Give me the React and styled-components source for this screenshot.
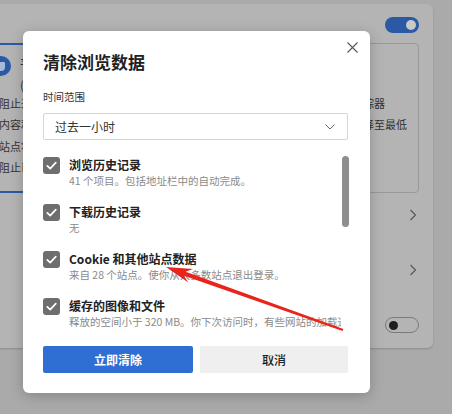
import React from 'react';
import styled, { createGlobalStyle } from 'styled-components';

const Global = createGlobalStyle`
  html, body { margin: 0; padding: 0; }
  body {
    width: 452px; height: 414px; overflow: hidden;
    background: #aaaaaa;
    font-family: "Noto Sans CJK SC", "Noto Sans", sans-serif;
  }
`;

const Page = styled.div`
  position: relative;
  width: 452px;
  height: 414px;
  overflow: hidden;
  padding-top: 4px;
  box-sizing: border-box;
`;

const SettingsCard = styled.section`
  margin-left: -20px;
  width: 453px;
  height: 344px;
  box-sizing: border-box;
  padding: 0 14px 0 8px;
  background: #b4b4b4;
  border-radius: 6px;
  box-shadow: 0 1px 2px rgba(0, 0, 0, 0.18);
  display: flex;
  flex-direction: column;
`;

const HeaderRow = styled.div`
  height: 39px;
  padding-top: 2px;
  box-sizing: border-box;
  display: flex;
  justify-content: flex-end;
  align-items: center;
`;

const Toggle = styled.div`
  width: 34px;
  height: 16px;
  box-sizing: border-box;
  border-radius: 8px;
  display: flex;
  align-items: center;
  padding: 0 3px;
  justify-content: ${p => (p.$on ? 'flex-end' : 'flex-start')};
  background: ${p => (p.$on ? '#2a5aa6' : 'transparent')};
  border: ${p => (p.$on ? 'none' : '1px solid #7a7a7a')};
`;

const Knob = styled.span`
  width: ${p => (p.$on ? '10px' : '9px')};
  height: ${p => (p.$on ? '10px' : '9px')};
  border-radius: 50%;
  background: ${p => (p.$on ? '#c9c9c9' : '#1e1e1e')};
`;

const Options = styled.div`
  height: 150px;
  display: flex;
  justify-content: space-between;
`;

const Option = styled.div`
  width: ${p => p.$w}px;
  box-sizing: border-box;
  border: ${p => (p.$selected ? '2px solid #2a5aa6' : '1px solid #999999')};
  border-radius: ${p => (p.$selected ? '6px' : '4px')};
  padding: ${p => (p.$selected ? '8px 6px 0 1px' : '9px 8px 0 11px')};
  color: #333333;
  font-size: 11px;
`;

const OptionHead = styled.div`
  display: flex;
  align-items: flex-start;
  gap: 9px;
  height: 40px;
`;

const ShieldIcon = styled.div`
  width: 20px;
  height: 20px;
  margin-top: 3px;
  border-radius: 50%;
  background: #2a5aa6;
  display: flex;
  align-items: center;
  justify-content: center;
  flex: none;
`;

const ShieldInner = styled.span`
  width: 8px;
  height: 9px;
  border-radius: 1px 1px 4px 4px;
  background: #a9bad6;
`;

const OptionTitle = styled.div`
  font-size: 12px;
  line-height: 21px;
  white-space: nowrap;
`;

const OptionList = styled.div`
  margin-top: 0;
  padding-left: ${p => (p.$selected ? '8px' : '0')};
  line-height: 21.3px;
  white-space: nowrap;
`;

const Row = styled.div`
  height: 44px;
  margin-top: ${p => (p.$first ? '0' : '11px')};
  display: flex;
  align-items: center;
  justify-content: flex-end;
`;

const Chevron = styled.svg`
  width: 8px;
  height: 12px;
  margin-right: 2px;
`;

const Dialog = styled.div`
  position: absolute;
  left: 23px;
  top: 31px;
  width: 347px;
  height: 362px;
  box-sizing: border-box;
  padding: 19px 22px 0 20px;
  background: #ffffff;
  border-radius: 6px;
  box-shadow: 0 3px 14px rgba(0, 0, 0, 0.22);
  display: flex;
  flex-direction: column;
`;

const Close = styled.svg`
  position: absolute;
  top: 11px;
  right: 12px;
  width: 11px;
  height: 11px;
`;

const Title = styled.h1`
  margin: 0;
  font-size: 17px;
  line-height: 24px;
  font-weight: 700;
  color: #1f1f1f;
`;

const Label = styled.div`
  margin-top: 15px;
  font-size: 10.5px;
  line-height: 16px;
  color: #333333;
`;

const Select = styled.div`
  margin-top: 8px;
  height: 27px;
  box-sizing: border-box;
  border: 1px solid #d6d6d6;
  border-radius: 2px;
  padding: 0 12px 0 11px;
  display: flex;
  align-items: center;
  justify-content: space-between;
  font-size: 12px;
  color: #333333;
`;

const ListWrap = styled.div`
  height: 194px;
  margin-right: -1px;
  display: flex;
  gap: 1px;
  overflow: hidden;
`;

const Items = styled.div`
  flex: 1;
  min-width: 0;
  padding-top: 17px;
  display: flex;
  flex-direction: column;
  gap: 15px;
`;

const Item = styled.div`
  display: flex;
  gap: 9px;
  min-width: 0;
`;

const Check = styled.div`
  width: 17px;
  height: 17px;
  flex: none;
  border-radius: 3px;
  background: #6e6e6e;
  display: flex;
  align-items: center;
  justify-content: center;
`;

const ItemText = styled.div`
  min-width: 0;
  flex: 1;
  overflow: hidden;
`;

const ItemTitle = styled.div`
  font-size: 12px;
  line-height: 16px;
  font-weight: 700;
  color: #222222;
  white-space: nowrap;
`;

const ItemSub = styled.div`
  font-size: 10.5px;
  line-height: 16px;
  color: #8a8a8a;
  white-space: nowrap;
  overflow: hidden;
`;

const ScrollTrack = styled.div`
  width: 7px;
  flex: none;
`;

const Thumb = styled.div`
  margin-top: 16px;
  height: 71px;
  border-radius: 4px;
  background: #8e8e8e;
`;

const Buttons = styled.div`
  margin-top: 12px;
  display: grid;
  grid-template-columns: 150px 1fr;
  gap: 7px;
`;

const Button = styled.div`
  height: 27px;
  display: flex;
  align-items: center;
  justify-content: center;
  font-size: 12px;
  font-weight: ${p => (p.$primary ? 700 : 500)};
  border-radius: 2px;
  color: ${p => (p.$primary ? '#ffffff' : '#222222')};
  background: ${p => (p.$primary ? '#2f6fd3' : '#efefef')};
`;

const Annotation = styled.svg`
  position: absolute;
  left: 0;
  top: 0;
  width: 452px;
  height: 414px;
  pointer-events: none;
`;

const CheckMark = () => (
  <svg width="13" height="13" viewBox="0 0 13 13">
    <path d="M2.3 6.8 L5.2 9.6 L10.8 3.6" fill="none" stroke="#ffffff" strokeWidth="1.7" strokeLinecap="round" strokeLinejoin="round" />
  </svg>
);

const ChevronRight = () => (
  <Chevron viewBox="0 0 8 12">
    <path d="M1.5 1 L6.5 6 L1.5 11" fill="none" stroke="#555555" strokeWidth="1.1" />
  </Chevron>
);

const items = [
  { title: '浏览历史记录', sub: '41 个项目。包括地址栏中的自动完成。' },
  { title: '下载历史记录', sub: '无' },
  { title: 'Cookie 和其他站点数据', sub: '来自 28 个站点。使你从大多数站点退出登录。' },
  { title: '缓存的图像和文件', sub: '释放的空间小于 320 MB。你下次访问时，有些网站的加载速度可能会更慢。' },
];

export default function App() {
  return (
    <Page>
      <Global />
      <SettingsCard>
        <HeaderRow>
          <Toggle $on><Knob $on /></Toggle>
        </HeaderRow>
        <Options>
          <Option $selected $w={176}>
            <OptionHead>
              <ShieldIcon><ShieldInner /></ShieldIcon>
              <OptionTitle>平衡<br />(推荐)</OptionTitle>
            </OptionHead>
            <OptionList $selected>
              <div>阻止来自未访问站点的跟踪器</div>
              <div>内容和广告可能不太个性化</div>
              <div>站点将按预期运行</div>
              <div>阻止已知的有害跟踪器</div>
            </OptionList>
          </Option>
          <Option $w={189}>
            <OptionHead>
              <ShieldIcon><ShieldInner /></ShieldIcon>
              <OptionTitle>严格</OptionTitle>
            </OptionHead>
            <OptionList>
              <div>阻止所有站点的大部分跟踪器</div>
              <div>内容和广告的个性化程度降至最低</div>
              <div>站点的部分可能无法正常</div>
              <div>阻止已知的有害跟踪器</div>
            </OptionList>
          </Option>
        </Options>
        <Row $first><ChevronRight /></Row>
        <Row><ChevronRight /></Row>
        <Row><Toggle><Knob /></Toggle></Row>
      </SettingsCard>

      <Dialog>
        <Close viewBox="0 0 11 11">
          <path d="M0.5 0.5 L10.5 10.5 M10.5 0.5 L0.5 10.5" stroke="#555555" strokeWidth="1.1" />
        </Close>
        <Title>清除浏览数据</Title>
        <Label>时间范围</Label>
        <Select>
          <span>过去一小时</span>
          <svg width="10" height="6" viewBox="0 0 10 6">
            <path d="M0.5 0.5 L5 5 L9.5 0.5" fill="none" stroke="#666666" strokeWidth="1" />
          </svg>
        </Select>
        <ListWrap>
          <Items>
            {items.map(it => (
              <Item key={it.title}>
                <Check><CheckMark /></Check>
                <ItemText>
                  <ItemTitle>{it.title}</ItemTitle>
                  <ItemSub>{it.sub}</ItemSub>
                </ItemText>
              </Item>
            ))}
          </Items>
          <ScrollTrack><Thumb /></ScrollTrack>
        </ListWrap>
        <Buttons>
          <Button $primary>立即清除</Button>
          <Button>取消</Button>
        </Buttons>
      </Dialog>

      <Annotation viewBox="0 0 452 414">
        <polygon
          points="166,267 193,269 185.6,271.7 343.4,329 342.6,331 184,275.8 188.3,282.6"
          fill="#e8241c"
        />
      </Annotation>
    </Page>
  );
}
